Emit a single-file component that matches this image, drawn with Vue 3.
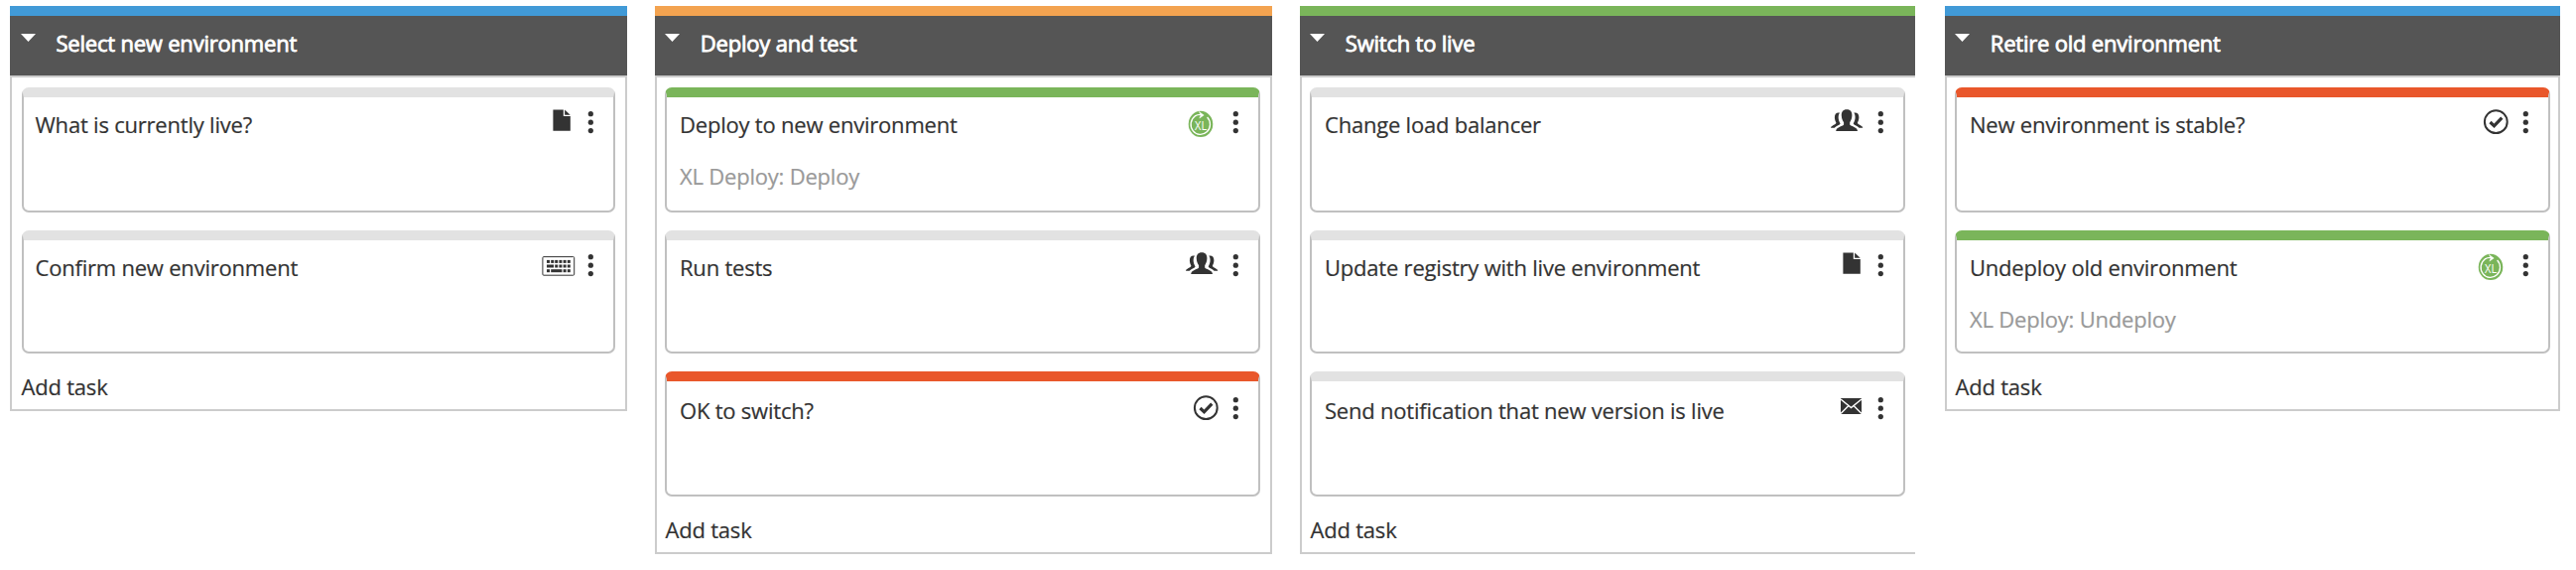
<script setup>
const columns = [
  {
    title: 'Select new environment',
    color: 'blue',
    variant: 'first',
    tasks: [
      { title: 'What is currently live?', icon: 'doc', color: 'gray' },
      { title: 'Confirm new environment', icon: 'keyboard', color: 'gray' },
    ],
  },
  {
    title: 'Deploy and test',
    color: 'orange',
    variant: 'second',
    tasks: [
      { title: 'Deploy to new environment', sub: 'XL Deploy: Deploy', icon: 'xl', color: 'green' },
      { title: 'Run tests', icon: 'people', color: 'gray' },
      { title: 'OK to switch?', icon: 'check', color: 'red' },
    ],
  },
  {
    title: 'Switch to live',
    color: 'green',
    variant: 'third',
    tasks: [
      { title: 'Change load balancer', icon: 'people', color: 'gray' },
      { title: 'Update registry with live environment', icon: 'doc', color: 'gray' },
      { title: 'Send notification that new version is live', icon: 'mail', color: 'gray' },
    ],
  },
  {
    title: 'Retire old environment',
    color: 'blue',
    variant: 'fourth',
    tasks: [
      { title: 'New environment is stable?', icon: 'check', color: 'red' },
      { title: 'Undeploy old environment', sub: 'XL Deploy: Undeploy', icon: 'xl', color: 'green' },
    ],
  },
]

const keyRows = [
  { y: 13.9, keys: [[11, 3], [15.2, 3], [19.2, 3], [23.4, 3], [27.6, 3], [31.8, 3]] },
  { y: 18.5, keys: [[11, 7], [19.2, 3], [23.4, 3], [27.6, 3], [31.8, 3]] },
  { y: 23.2, keys: [[11, 3], [15.2, 11.2], [27.6, 3], [31.8, 3]] },
]
</script>

<template>
  <main class="board">
    <section v-for="col in columns" :key="col.title" class="column" :class="col.variant">
      <header class="head" :class="col.color">
        <svg class="caret" width="15" height="8" viewBox="0 0 15 8"><path d="M0 0H15L7.5 8Z" fill="#fff" /></svg>
        <h2>{{ col.title }}</h2>
      </header>
      <div class="body">
        <article v-for="task in col.tasks" :key="task.title" class="card" :class="task.color">
          <div class="info">
            <h3>{{ task.title }}</h3>
            <p v-if="task.sub">{{ task.sub }}</p>
          </div>
          <svg class="icon" width="40" height="40" viewBox="0 0 40 40">
            <g v-if="task.icon === 'doc'" fill="#333">
              <path d="M17.4 6.4H27.8V13H34.8V27.7H17.4Z" />
              <path d="M29.1 6.5L34.7 11.7H29.1Z" />
            </g>
            <g v-else-if="task.icon === 'keyboard'">
              <rect x="6.9" y="10.6" width="31.8" height="18.6" rx="1" fill="none" stroke="#333" stroke-width="1" />
              <template v-for="row in keyRows" :key="row.y">
                <rect v-for="k in row.keys" :key="k[0]" :x="k[0]" :y="row.y" :width="k[1]" height="3" fill="#333" />
              </template>
            </g>
            <g v-else-if="task.icon === 'xl'">
              <ellipse cx="20" cy="20.9" rx="12.3" ry="13.1" fill="#7ab55a" />
              <path d="M26.6 14A9.7 10.2 0 1 1 14.2 12.9Q16.8 11.2 20.6 11.4" fill="none" stroke="#fff" stroke-width="1.3" />
              <path d="M18.4 8.5L23.2 12L18.8 15.1L20.1 11.8Z" fill="#fff" stroke="#fff" stroke-width=".5" />
              <text x="14.1" y="27" textLength="12" lengthAdjust="spacingAndGlyphs" class="logo">XL</text>
            </g>
            <g v-else-if="task.icon === 'people'" fill="#333">
              <path d="M14 9.6C10.8 8.8 8.7 10.8 8.9 14.5C9 17.3 10 18.6 10.4 19.7C10.3 21.4 5 22.4 5 24.8H8.7C10.3 22.8 13.6 22.2 14.6 20.4C12.5 17.2 11.9 12.8 14 9.6Z" />
              <path d="M28.3 9.6C31.5 8.8 33.6 10.8 33.4 14.5C33.3 17.3 32.3 18.6 31.9 19.7C32 21.4 37.3 22.4 37.3 24.8H33.6C32 22.8 28.7 22.2 27.7 20.4C29.8 17.2 30.4 12.8 28.3 9.6Z" />
              <path d="M21.1 6.3C25 6.3 26.6 9 26.4 12.6C26.3 15.7 25 18 24.2 19.3V21.4C25.5 23.2 32 23.8 32 28.1H10.2C10.2 23.8 16.8 23.2 18.1 21.4V19.3C17.2 18 15.9 15.7 15.8 12.6C15.6 9 17.2 6.3 21.1 6.3Z" />
            </g>
            <g v-else-if="task.icon === 'check'" fill="none" stroke="#333">
              <circle cx="25.3" cy="18.7" r="11.4" stroke-width="2" />
              <path d="M19.5 19L23.5 22.8L31.3 14.7" stroke-width="3.2" />
            </g>
            <g v-else>
              <rect x="15" y="9" width="21" height="16" fill="#333" />
              <path d="M15 10L25.5 18.5L36 10M15 24.4L22.5 17M36 24.4L28.5 17" fill="none" stroke="#fff" stroke-width="1.4" />
            </g>
          </svg>
          <svg class="kebab" width="28" height="40" viewBox="0 0 28 40" fill="#333">
            <circle cx="15.3" cy="10.7" r="2.6" />
            <circle cx="15.3" cy="19.2" r="2.6" />
            <circle cx="15.3" cy="27.6" r="2.6" />
          </svg>
        </article>
        <div class="add">Add task</div>
      </div>
    </section>
  </main>
</template>

<style>
body {
  margin: 0;
  background: #fff;
}
</style>

<style scoped>
.board {
  display: flex;
  align-items: flex-start;
  box-sizing: border-box;
  width: 2596px;
  height: 574px;
  padding: 6px 0 0 10px;
  overflow: hidden;
  font-family: "Open Sans", "Noto Sans", sans-serif;
  font-size: 22px;
  letter-spacing: -0.21px;
  color: #333;
}
.column {
  box-sizing: border-box;
  flex: none;
  width: 622px;
  margin-right: 28px;
}
.third {
  width: 620px;
  margin-right: 30px;
}
.fourth {
  width: 620px;
  margin-right: 0;
}
h2,
h3,
p {
  margin: 0;
  font-size: 22px;
  line-height: 30px;
  white-space: nowrap;
}
h3,
p,
.add {
  -webkit-text-stroke: 0.2px currentColor;
}
.head {
  display: flex;
  box-sizing: border-box;
  height: 70px;
  padding-left: 10.3px;
  border-top: 10px solid;
  background: #555;
  color: #fff;
}
.first .head {
  padding-left: 11px;
}
.caret {
  flex: none;
  margin-top: 18px;
}
.head h2 {
  margin: 12px 0 0 20.5px;
  font-weight: 400;
  -webkit-text-stroke: 0.8px #fff;
}
.body {
  box-sizing: border-box;
  padding: 10px 10px 0 8px;
  border: 2px solid #ccc;
}
.first .body {
  padding-left: 10px;
}
.third .body {
  padding-right: 10px;
  border-right: 0;
}
.fourth .body {
  padding-right: 8px;
}
.card {
  display: flex;
  box-sizing: border-box;
  height: 126px;
  margin-bottom: 18px;
  padding-top: 6px;
  border: 2px solid #c0c0c0;
  border-top-width: 10px;
  border-radius: 7px;
  background: #fff;
}
.card:nth-child(2) {
  height: 124px;
}
.card:nth-child(3) {
  padding-top: 8px;
}
.info {
  flex: 1;
  padding: 6px 0 0 13px;
}
.first .info {
  padding-left: 11.5px;
}
.info h3 {
  font-weight: 400;
}
.info p {
  margin-top: 22px;
  color: #999;
}
.icon {
  flex: none;
}
.kebab {
  flex: none;
  margin-right: 10px;
}
.logo {
  font-family: "Open Sans", sans-serif;
  font-size: 12px;
  letter-spacing: 0;
  fill: #fff;
}
.add {
  height: 38px;
  padding-left: 0.5px;
  line-height: 30px;
  white-space: nowrap;
}
.first .add {
  margin-left: -1px;
}
.blue {
  border-top-color: #419ad7;
}
.orange {
  border-top-color: #f3a350;
}
.green {
  border-top-color: #7ab55a;
}
.red {
  border-top-color: #e9572b;
}
.gray {
  border-top-color: #e2e2e2;
}
</style>
